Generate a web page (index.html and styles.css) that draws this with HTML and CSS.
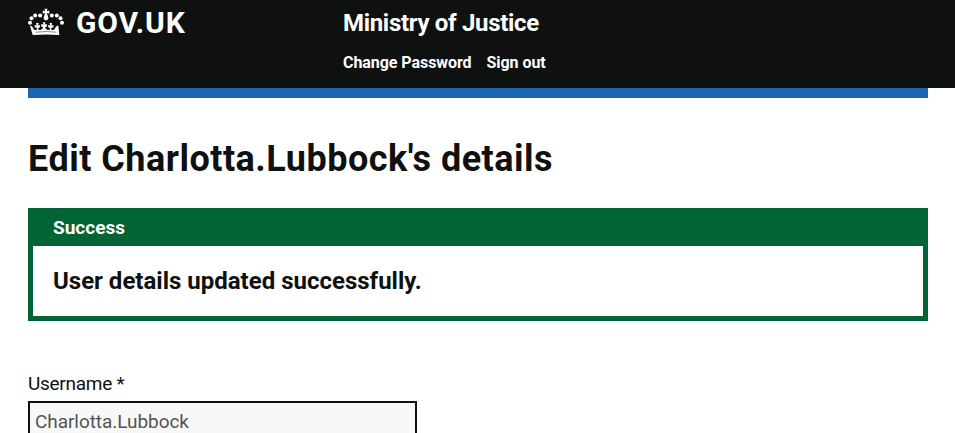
FILE: index.html
```html
<!DOCTYPE html>
<html lang="en">
<head>
<meta charset="utf-8">
<title>Edit user details</title>
<link rel="stylesheet" href="styles.css">
</head>
<body>
<header class="header">
  <div class="container header-row">
    <a class="logo" href="#">
      <svg class="crown" viewBox="0 0 36 27" width="36" height="27" fill="currentColor" aria-hidden="true">
        <circle cx="2" cy="14.7" r="2"/><circle cx="3.5" cy="10.3" r="2"/><circle cx="7.2" cy="7.6" r="2"/><circle cx="12.2" cy="7.5" r="2"/>
        <circle cx="34" cy="14.7" r="2"/><circle cx="32.5" cy="10.3" r="2"/><circle cx="28.8" cy="7.6" r="2"/><circle cx="23.8" cy="7.5" r="2"/>
        <path d="M16.5 .8h3l-.7 2.4 2.5-.7v3.2l-2.5-.8 1.5 4.4c.4 1.7-.7 3.1-2.3 3.1s-2.7-1.4-2.3-3.1l1.5-4.4-2.5.8V2.500l2.500.7z"/>
        <path d="M4.700 27 1.900 17.500l2.300 1.100 1.200 2.100c.8 1.300 2 1.700 3 1.200.8-.5.8-1.500.1-2.100-.5-.5-1.200-.4-1.700 0l-.1-2.900 2 .6-.6-2.400h2.600l-.6 2.400 2.100-.6-.4 2.700c-.6-.2-1.200.1-1.500.6-.4.9.2 1.700 1.200 1.800 1.800.2 3.600-1.200 3.400-2.900-.4-.5-1-.4-1.600.1v-3.300l2.200.7-.7-2.400h2.600l-.7 2.400 2.200-.7v3.300c-.6-.5-1.200-.6-1.600-.1-.2 1.700 1.600 3.100 3.400 2.900 1-.1 1.600-.9 1.200-1.800-.3-.5-.9-.8-1.500-.6l-.4-2.700 2.100.6-.6-2.400h2.600l-.6 2.400 2-.6-.1 2.900c-.5-.4-1.200-.5-1.700 0-.7.6-.7 1.600.1 2.100 1 .5 2.200.1 3-1.200l1.200-2.100 2.300-1.100L31.300 27c-8.900-.8-17.700-.8-26.600 0z"/>
        <path class="crown-band" d="M7.500 24.200q10.500-1.300 21 0"/>
      </svg>
      <span class="logo-text">GOV.UK</span>
    </a>
    <div class="header-content">
      <a class="service" href="#">Ministry of Justice</a>
      <nav class="nav"><a href="#">Change Password</a><a href="#">Sign out</a></nav>
    </div>
  </div>
</header>
<main class="container main">
  <h1>Edit Charlotta.Lubbock's details</h1>
  <section class="banner">
    <h2>Success</h2>
    <p>User details updated successfully.</p>
  </section>
  <label for="username">Username *</label>
  <input id="username" value="Charlotta.Lubbock" disabled>
</main>
</body>
</html>
```
FILE: styles.css
```css
* { box-sizing: border-box; }
html { overflow: hidden; }
body { margin: 0; color: #0f1110; background: #fff; font-family: Roboto, "Liberation Sans", sans-serif; }
.container { width: 900px; margin-left: 28px; }
.header { height: 88px; background: #0f1110; }
.header-row { display: flex; }
a { color: #fff; text-decoration: none; }
.logo { width: 315px; display: flex; }
.crown { margin-top: 8px; }
.crown-band { fill: none; stroke: #0f1110; stroke-width: 0.5; }
.logo-text { margin-left: 12px; font-size: 30px; font-weight: 700; line-height: 46px; letter-spacing: 0.8px; }
.service { display: block; font-size: 24px; font-weight: 700; line-height: 46px; letter-spacing: -0.32px; }
.nav { display: flex; gap: 15px; font-size: 16px; font-weight: 700; line-height: 34px; letter-spacing: -0.06px; }
.main { border-top: 10px solid #1b65af; padding-top: 40px; }
h1 { margin: 0 0 30px; font-size: 36px; line-height: 42px; height: 40px; letter-spacing: 0.49px; }
.banner { height: 113px; border: 5px solid #006435; background: #fff; }
h2 { margin: 0; height: 33px; padding-left: 20px; background: #006435; color: #fff; font-size: 19px; line-height: 29px; }
.banner p { margin: 20px; font-size: 24px; font-weight: 700; line-height: 30px; }
label { display: block; margin-top: 50px; font-size: 19px; line-height: 25px; letter-spacing: -0.28px; }
input { display: block; width: 389px; height: 40px; margin-top: 5px; padding: 5px; border: 2px solid #0f1110; background: #f8f8f8; color: #545454; font: inherit; font-size: 19px; letter-spacing: -0.06px; }
```
